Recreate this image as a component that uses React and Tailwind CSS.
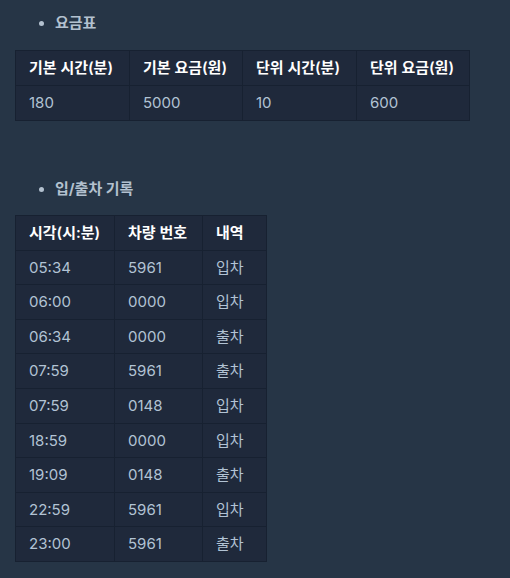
export default function App() {
  const fee = { head: ["기본 시간(분)", "기본 요금(원)", "단위 시간(분)", "단위 요금(원)"], row: ["180", "5000", "10", "600"] };
  const feeW = ["w-[114px]", "w-[113px]", "w-[114px]", "w-[113px]"];
  const recs = [
    ["05:34", "5961", "입차"],
    ["06:00", "0000", "입차"],
    ["06:34", "0000", "출차"],
    ["07:59", "5961", "출차"],
    ["07:59", "0148", "입차"],
    ["18:59", "0000", "입차"],
    ["19:09", "0148", "출차"],
    ["22:59", "5961", "입차"],
    ["23:00", "5961", "출차"],
  ];
  const font = { fontFamily: 'Inter, "Noto Sans CJK KR", sans-serif' };
  const th = "border border-[#172131] px-[13px] py-[8px] text-left font-semibold text-white leading-[18px]";
  const td = "border border-[#172131] px-[13px] py-[8px] text-[#b2c3d4] leading-[17.6px]";
  return (
    <div className="w-[510px] h-[578px] bg-[#263546] overflow-hidden" style={font}>
      <div className="pl-[15px] pt-[12px]">
        <div className="flex items-center h-[22px] pl-[24px] text-[15px] font-bold text-[#b3c1cf]">
          <span className="w-[5px] h-[5px] rounded-full bg-[#b3c1cf] mr-[11px]"></span>
          요금표
        </div>
        <table className="mt-[16px] border-collapse bg-[#1f293b] text-[15px] table-fixed w-[454px]">
          <thead>
            <tr>
              {fee.head.map((h, i) => (
                <th key={i} className={th + " " + feeW[i]}>{h}</th>
              ))}
            </tr>
          </thead>
          <tbody>
            <tr>
              {fee.row.map((c, i) => (
                <td key={i} className={td}>{c}</td>
              ))}
            </tr>
          </tbody>
        </table>
        <div className="mt-[58px] flex items-center h-[22px] pl-[24px] text-[15px] font-bold text-[#b3c1cf]">
          <span className="w-[5px] h-[5px] rounded-full bg-[#b3c1cf] mr-[11px]"></span>
          입/출차 기록
        </div>
        <table className="mt-[14px] border-collapse bg-[#1f293b] text-[15px]">
          <thead>
            <tr>
              <th className={th + " w-[99px]"}>시각(시:분)</th>
              <th className={th + " w-[88px]"}>차량 번호</th>
              <th className={th + " w-[64px]"}>내역</th>
            </tr>
          </thead>
          <tbody>
            {recs.map((r, i) => (
              <tr key={i}>
                {r.map((c, j) => (
                  <td key={j} className={td}>{c}</td>
                ))}
              </tr>
            ))}
          </tbody>
        </table>
      </div>
    </div>
  );
}
